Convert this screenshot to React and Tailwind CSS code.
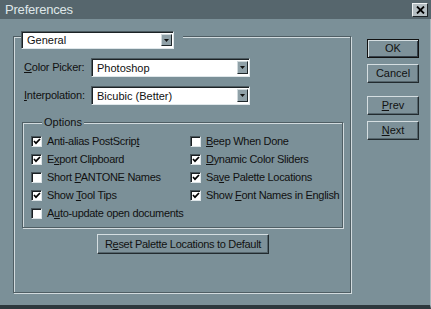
import React from "react";

function Arrow() {
  return (
    <svg width="5" height="3" viewBox="0 0 5 3">
      <path d="M0 0 H5 L2.5 3 Z" fill="#111" />
    </svg>
  );
}

function Select({ w, h, text }) {
  return (
    <div
      className={`${w} ${h} bg-white flex items-stretch border border-t-[#4c5a60] border-l-[#4c5a60] border-r-[#dfe7ea] border-b-[#dfe7ea] shadow-[inset_1px_1px_0_#1c2225]`}
    >
      <div className="flex-1 flex items-center pl-[5px] pt-[1px] text-[11px] text-[#111] leading-none">
        {text}
      </div>
      <div className="w-[11px] my-[2px] mr-[1px] bg-[#8fa0a7] border border-t-[#d0d9dc] border-l-[#d0d9dc] border-r-[#1f272a] border-b-[#1f272a] flex items-center justify-center">
        <Arrow />
      </div>
    </div>
  );
}

function Check({ checked }) {
  return (
    <span className="w-[11px] h-[11px] shrink-0 bg-white border border-t-[#47545a] border-l-[#47545a] border-r-[#dde5e8] border-b-[#dde5e8] shadow-[inset_1px_1px_0_#1a1f22] flex items-center justify-center">
      {checked && (
        <svg width="8" height="7" viewBox="0 0 8 7">
          <path d="M1 3 L3 5.2 L7 1" stroke="#000" strokeWidth="1.7" fill="none" />
        </svg>
      )}
    </span>
  );
}

function Row({ checked, children }) {
  return (
    <div className="h-[18px] flex items-center gap-[5px]">
      <Check checked={checked} />
      <span className="text-[11px] text-[#111] leading-none tracking-[-0.3px] whitespace-nowrap">
        {children}
      </span>
    </div>
  );
}

function Btn({ children, def, cls }) {
  return (
    <div
      className={`${cls} flex items-center justify-center text-[11px] text-[#111] leading-none bg-[#7d9199] ${
        def
          ? "border border-[#111] shadow-[inset_1px_1px_0_#d5dee1,inset_-1px_-1px_0_#34404a]"
          : "border border-t-[#d5dee1] border-l-[#d5dee1] border-r-[#222b2f] border-b-[#222b2f] shadow-[inset_-1px_-1px_0_#55656c]"
      }`}
    >
      {children}
    </div>
  );
}

const etched =
  "border border-[#4f5e64] shadow-[inset_1px_1px_0_#d2dbde,1px_1px_0_#d2dbde]";

export default function App() {
  return (
    <div className="w-[431px] h-[309px] bg-[#7b9098] flex flex-col font-['Liberation_Sans',Arial,sans-serif] overflow-hidden">
      <div className="h-[19px] shrink-0 bg-[#56666d] flex items-center justify-between pl-[5px] pr-[3px]">
        <span className="text-[13px] text-[#dfe6e9] leading-none tracking-[-0.2px]">Preferences</span>
        <div className="w-[16px] h-[14px] bg-[#b5bfc3] border border-t-[#eef2f3] border-l-[#eef2f3] border-r-[#1d2427] border-b-[#1d2427] flex items-center justify-center">
          <svg width="9" height="8" viewBox="0 0 9 8">
            <path d="M1 0.5 L8 7.5 M8 0.5 L1 7.5" stroke="#000" strokeWidth="1.8" />
          </svg>
        </div>
      </div>

      <div className="flex-1 flex items-start pl-[13px] border-b-[4px] border-[#2d383d] border-r border-r-[#a9b6bb]">
        <div className={`mt-[17px] w-[338px] h-[257px] flex flex-col ${etched}`}>
          <div className="-mt-[6px] ml-[7px] self-start bg-[#7b9098] pr-[9px]">
            <Select w="w-[153px]" h="h-[18px]" text="General" />
          </div>

          <div className="mt-[9px] ml-[10px] flex items-center">
            <span className="w-[67px] text-[11px] text-[#111] leading-none tracking-[-0.2px]">
              <u>C</u>olor Picker:
            </span>
            <Select w="w-[159px]" h="h-[19px]" text="Photoshop" />
          </div>

          <div className="mt-[9px] ml-[10px] flex items-center">
            <span className="w-[67px] text-[11px] text-[#111] leading-none tracking-[-0.2px]">
              <u>I</u>nterpolation:
            </span>
            <Select w="w-[159px]" h="h-[19px]" text="Bicubic (Better)" />
          </div>

          <div className={`mt-[17px] ml-[8px] w-[321px] h-[106px] flex flex-col ${etched}`}>
            <span className="-mt-[7px] ml-[19px] self-start bg-[#7b9098] px-[2px] h-[13px] leading-[13px] text-[11px] text-[#111]">
              Options
            </span>
            <div className="mt-[3px] pl-[8px] grid grid-cols-[159px_1fr]">
              <Row checked>Anti-alias PostScrip<u>t</u></Row>
              <Row><u>B</u>eep When Done</Row>
              <Row checked>E<u>x</u>port Clipboard</Row>
              <Row checked><u>D</u>ynamic Color Sliders</Row>
              <Row>Short <u>P</u>ANTONE Names</Row>
              <Row checked>Sa<u>v</u>e Palette Locations</Row>
              <Row checked>Show <u>T</u>ool Tips</Row>
              <Row checked>Show <u>F</u>ont Names in English</Row>
              <Row>A<u>u</u>to-update open documents</Row>
            </div>
          </div>

          <Btn cls="mt-[6px] ml-[83px] w-[172px] h-[20px] tracking-[-0.3px]">
            R<u>e</u>set Palette Locations to Default
          </Btn>
        </div>

        <div className="ml-[16px] mt-[20px] flex flex-col">
          <Btn def cls="w-[52px] h-[19px]">OK</Btn>
          <Btn cls="mt-[6px] w-[52px] h-[19px]">Cancel</Btn>
          <Btn cls="mt-[13px] w-[52px] h-[19px]"><u>P</u>rev</Btn>
          <Btn cls="mt-[6px] w-[52px] h-[19px]"><u>N</u>ext</Btn>
        </div>
      </div>
    </div>
  );
}
